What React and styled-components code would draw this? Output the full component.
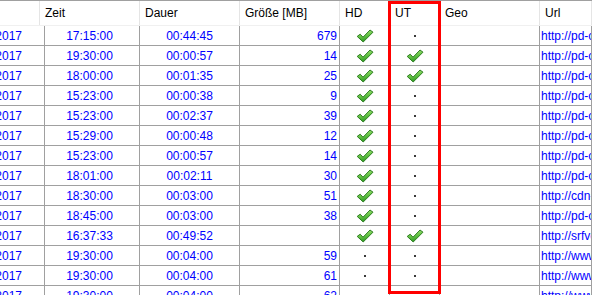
import React from "react";
import styled, { createGlobalStyle } from "styled-components";

const Global = createGlobalStyle`
  html, body { margin: 0; padding: 0; background: #fff; }
  body { font-family: "Liberation Sans", Arial, sans-serif; }
`;

const COLS = "40px 100px 100px 100px 50px 50px 100px 1fr";

const Frame = styled.div`
  position: relative;
  width: 592px;
  height: 295px;
  overflow: hidden;
  background: #fff;
  font-size: 12px;
`;

const HeaderRow = styled.div`
  display: grid;
  grid-template-columns: ${COLS};
  height: 26px;
  box-sizing: border-box;
  border-top: 1px solid #a0a0a0;
  border-bottom: 1px solid #f0f0f0;
`;

const HeadCell = styled.div`
  display: flex;
  align-items: center;
  padding-left: 5px;
  box-sizing: border-box;
  border-right: 1px solid #e5e5e5;
  color: #000;
  white-space: nowrap;
  overflow: hidden;
`;

const Row = styled.div`
  display: grid;
  grid-template-columns: ${COLS};
  height: 20px;
  box-sizing: border-box;
  border-bottom: 1px solid #a0a0a0;
`;

const Cell = styled.div`
  display: flex;
  align-items: center;
  justify-content: ${(p) =>
    p.$align === "right" ? "flex-end" : p.$align === "center" ? "center" : "flex-start"};
  padding: 0 ${(p) => (p.$pad != null ? p.$pad : 2)}px;
  box-sizing: border-box;
  border-right: 1px solid #a0a0a0;
  color: #0000ff;
  white-space: nowrap;
  overflow: hidden;
  min-width: 0;
`;

const Dot = styled.span`
  display: block;
  width: 2px;
  height: 2px;
  background: #3a3a3a;
`;

const Highlight = styled.div`
  position: absolute;
  left: 388px;
  top: 1px;
  width: 53px;
  height: 293px;
  box-sizing: border-box;
  border: 3px solid #ff0000;
  pointer-events: none;
`;

let gid = 0;
function Check() {
  const id = React.useMemo(() => `chk${gid++}`, []);
  return (
    <svg width="18" height="14" viewBox="0 0 18 14">
      <defs>
        <linearGradient id={id} x1="0" y1="0" x2="0.3" y2="1">
          <stop offset="0" stopColor="#b6f08e" />
          <stop offset="0.5" stopColor="#6cc84a" />
          <stop offset="1" stopColor="#2f9a24" />
        </linearGradient>
      </defs>
      <path
        d="M1.2 7.4 L4.2 5.2 L7 8.2 L14 1 L17 3.2 L7.2 13 Z"
        fill={`url(#${id})`}
        stroke="#2e7d22"
        strokeWidth="1"
        strokeLinejoin="round"
      />
    </svg>
  );
}

const rows = [
  ["17:15:00", "00:44:45", "679", 1, 0, "http://pd-cdn.example.ch/video.mp4"],
  ["19:30:00", "00:00:57", "14", 1, 1, "http://pd-cdn.example.ch/video.mp4"],
  ["18:00:00", "00:01:35", "25", 1, 1, "http://pd-cdn.example.ch/video.mp4"],
  ["15:23:00", "00:00:38", "9", 1, 0, "http://pd-cdn.example.ch/video.mp4"],
  ["15:23:00", "00:02:37", "39", 1, 0, "http://pd-cdn.example.ch/video.mp4"],
  ["15:29:00", "00:00:48", "12", 1, 0, "http://pd-cdn.example.ch/video.mp4"],
  ["15:23:00", "00:00:57", "14", 1, 0, "http://pd-cdn.example.ch/video.mp4"],
  ["18:01:00", "00:02:11", "30", 1, 0, "http://pd-cdn.example.ch/video.mp4"],
  ["18:30:00", "00:03:00", "51", 1, 0, "http://cdn-vod.example.ch/video.mp4"],
  ["18:45:00", "00:03:00", "38", 1, 0, "http://pd-cdn.example.ch/video.mp4"],
  ["16:37:33", "00:49:52", "", 1, 1, "http://srfvod.example.ch/video.mp4"],
  ["19:30:00", "00:04:00", "59", 0, 0, "http://www.example.ch/video.mp4"],
  ["19:30:00", "00:04:00", "61", 0, 0, "http://www.example.ch/video.mp4"],
  ["19:30:00", "00:04:00", "62", 0, 0, "http://www.example.ch/video.mp4"],
];

const headers = ["", "Zeit", "Dauer", "Größe [MB]", "HD", "UT", "Geo", "Url"];

export default function App() {
  return (
    <>
      <Global />
      <Frame>
        <HeaderRow>
          {headers.map((h, i) => (
            <HeadCell key={i}>{h}</HeadCell>
          ))}
        </HeaderRow>
        {rows.map((r, i) => (
          <Row key={i}>
            <Cell $align="right" $pad={22}>12.03.2017</Cell>
            <Cell $align="center">{r[0]}</Cell>
            <Cell $align="center">{r[1]}</Cell>
            <Cell $align="right">{r[2]}</Cell>
            <Cell $align="center">{r[3] ? <Check /> : <Dot />}</Cell>
            <Cell $align="center">{r[4] ? <Check /> : <Dot />}</Cell>
            <Cell />
            <Cell $pad={1}>{r[5]}</Cell>
          </Row>
        ))}
        <Highlight />
      </Frame>
    </>
  );
}
